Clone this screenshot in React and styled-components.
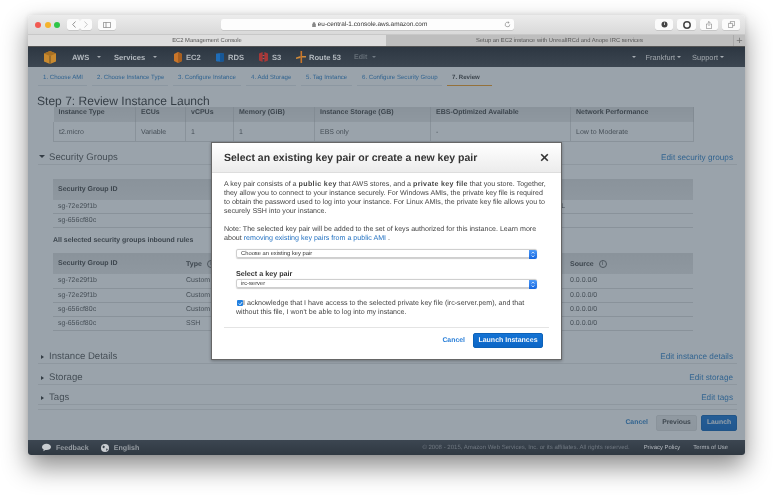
import React from 'react';
import styled, { createGlobalStyle } from 'styled-components';

const GlobalStyle = createGlobalStyle`
  html, body {
    margin: 0;
    padding: 0;
    background: #fff;
    font-family: "Liberation Sans", Arial, sans-serif;
    text-rendering: geometricPrecision;
  }
  * { box-sizing: border-box; }
`;

const Page = styled.div`
  width: 773px;
  height: 495px;
  padding: 15px 28px 0;
  overflow: hidden;
`;

const Window = styled.div`
  position: relative;
  width: 717px;
  height: 440px;
  display: flex;
  flex-direction: column;
  border-radius: 4px 4px 3px 3px;
  background: #fff;
  filter: blur(0.45px);
  will-change: transform;
  box-shadow: 0 12px 26px rgba(0, 0, 0, 0.45), 0 0 6px rgba(0, 0, 0, 0.12);
`;

const TitleBar = styled.div`
  height: 19px;
  flex: none;
  display: flex;
  align-items: center;
  padding: 0 4px 0 7px;
  background: linear-gradient(#ececec, #d9d9d9);
  border-radius: 4px 4px 0 0;
`;

const Light = styled.span`
  width: 6px;
  height: 6px;
  border-radius: 50%;
  margin-right: 3.5px;
  background: ${p => p.$color};
`;

const ToolGroup = styled.div`
  display: flex;
  gap: ${p => p.$gap || 0}px;
  margin-left: ${p => p.$left || 0}px;
`;

const ToolButton = styled.div`
  width: ${p => p.$w || 18}px;
  height: 11px;
  display: flex;
  align-items: center;
  justify-content: center;
  background: #fbfbfb;
  border-radius: 2px;
  box-shadow: 0 0.5px 0.5px rgba(0, 0, 0, 0.2);
`;

const UrlField = styled.div`
  width: 293px;
  height: 11px;
  margin-left: 105px;
  position: relative;
  display: flex;
  align-items: center;
  justify-content: center;
  background: #fdfdfd;
  border-radius: 2px;
  font-size: 6.4px;
  color: #333;
  box-shadow: 0 0.5px 0.5px rgba(0, 0, 0, 0.2);
  padding-left: 4px;
  gap: 2px;
`;

const Reload = styled.svg`
  position: absolute;
  right: 3px;
  top: 2px;
`;

const TabBar = styled.div`
  height: 13px;
  flex: none;
  display: flex;
  font-size: 5.8px;
  color: #555;
  border-top: 1px solid #c8c8c8;
  border-bottom: 1px solid #555;
`;

const Tab = styled.div`
  width: ${p => p.$w}px;
  display: flex;
  align-items: center;
  justify-content: center;
  background: ${p => (p.$active ? '#dedede' : '#bebebe')};
`;

const PlusTab = styled(Tab)`
  font-size: 11px;
  color: #777;
  border-left: 1px solid #aaa;
`;

const NavBar = styled.div`
  height: 20px;
  flex: none;
  display: flex;
  align-items: center;
  padding-left: 16px;
  background: linear-gradient(#2d3742, #3c4651);
  font-size: 7.6px;
  font-weight: 700;
  color: #b3b9bf;
`;

const NavItem = styled.div`
  display: flex;
  align-items: center;
  gap: ${p => p.$gap ?? 4}px;
  width: ${p => p.$w}px;
  flex: none;
  color: ${p => (p.$dim ? '#656e77' : '#b3b9bf')};
  font-size: ${p => p.$size || 7.6}px;
`;

const Caret = styled.span`
  width: 0;
  height: 0;
  flex: none;
  margin-left: ${p => p.$left ?? 4}px;
  border-left: 2px solid transparent;
  border-right: 2px solid transparent;
  border-top: 2px solid ${p => p.$color || '#a7adb3'};
`;

const NavRight = styled.div`
  display: flex;
  align-items: center;
  margin-left: auto;
  margin-right: 21px;
  font-weight: 400;
  font-size: 7.4px;
  color: #a2a8ae;
`;

const RegionLabel = styled.span`
  margin-left: ${p => p.$left}px;
`;

const Content = styled.div`
  flex: 1;
  display: flex;
  flex-direction: column;
  position: relative;
  min-height: 0;
  background: #fff;
  color: #444;
`;

const Steps = styled.div`
  height: 20px;
  flex: none;
  display: flex;
  padding-left: 10px;
  gap: 5px;
  font-size: 6.1px;
`;

const Step = styled.div`
  height: 19px;
  width: ${p => p.$w}px;
  padding: 7px 0 0 5px;
  white-space: nowrap;
  color: ${p => (p.$active ? '#444' : '#2f80c8')};
  font-weight: ${p => (p.$active ? 700 : 400)};
  border-bottom: ${p => (p.$active ? '1px solid #f29a1f' : '1px solid #e2e6ea')};
`;

const Heading = styled.h1`
  height: 20px;
  flex: none;
  margin: 0;
  padding: 7px 0 0 9px;
  font-size: 12.05px;
  line-height: 14px;
  font-weight: 400;
  color: #333;
`;

const DataTable = styled.table`
  flex: none;
  width: 640px;
  margin: ${p => p.$top || 0}px 0 0 25px;
  border-collapse: collapse;
  table-layout: fixed;
  font-size: 7px;
  color: #555;
  th {
    height: ${p => p.$head}px;
    padding: 0 0 ${p => p.$lift || 0}px 5px;
    text-align: left;
    font-weight: 700;
    white-space: nowrap;
    background: linear-gradient(#dedede, #e8e8e8);
    color: #444;
    border-right: ${p => (p.$lined ? '1px solid #cfcfcf' : 'none')};
  }
  td {
    height: ${p => p.$row}px;
    padding: ${p => (p.$lined ? 2 : 0)}px 0 0 5px;
    white-space: nowrap;
    overflow: visible;
    border-bottom: 1px solid #ddd;
    border-left: ${p => (p.$lined ? '1px solid #ddd' : 'none')};
    border-right: ${p => (p.$lined ? '1px solid #ddd' : 'none')};
  }
`;

const InfoMark = styled.span`
  display: inline-flex;
  align-items: center;
  justify-content: center;
  vertical-align: middle;
  width: 8px;
  height: 8px;
  margin-left: 5px;
  border: 0.7px solid #666;
  border-radius: 50%;
  font-size: 6px;
  font-weight: 400;
`;

const Section = styled.div`
  flex: none;
  height: ${p => p.$h}px;
  margin: ${p => p.$top || 0}px 8px 0 10px;
  padding: 0 4px 0 1px;
  display: flex;
  align-items: flex-end;
  border-bottom: 1px solid #e6e6e6;
  font-size: 9.6px;
  line-height: 13px;
  color: #555;
`;

const Arrow = styled.span`
  width: 0;
  height: 0;
  flex: none;
  align-self: flex-end;
  margin: ${p => (p.$open ? '0 4px 6px 0' : '0 5.5px 4px 1.5px')};
  border: 2.5px solid transparent;
  ${p => (p.$open
    ? 'border-top: 3px solid #333; border-left-width: 3px; border-right-width: 3px; border-bottom-width: 0;'
    : 'border-left: 3px solid #333; border-right-width: 0;')}
`;

const EditLink = styled.a`
  margin-left: auto;
  font-size: 8.2px;
  color: #2f80c8;
`;

const RuleLabel = styled.div`
  height: 25px;
  flex: none;
  margin-left: 25px;
  padding-top: 7px;
  font-size: 6.95px;
  line-height: 11px;
  font-weight: 700;
  color: #444;
`;

const Divider = styled.div`
  flex: none;
  height: 5px;
  margin: 0 8px 0 10px;
  border-bottom: 1px solid #e6e6e6;
`;

const Actions = styled.div`
  flex: none;
  display: flex;
  align-items: center;
  justify-content: flex-end;
  margin: 5px 8px 0 0;
`;

const TextButton = styled.span`
  font-size: 6.9px;
  font-weight: 700;
  color: ${p => p.$color || '#2f80c8'};
  margin-right: ${p => p.$right}px;
`;

const Button = styled.div`
  height: ${p => p.$h}px;
  width: ${p => p.$w}px;
  margin-right: ${p => p.$right || 0}px;
  display: flex;
  align-items: center;
  justify-content: center;
  border-radius: 2px;
  font-size: ${p => p.$size || 6.8}px;
  font-weight: 700;
  color: ${p => (p.$primary ? '#f4f8fc' : '#444')};
  background: ${p => (p.$primary ? 'linear-gradient(#1473d4, #0c66c6)' : 'linear-gradient(#ebebeb, #e6e6e6)')};
  border: 1px solid ${p => (p.$primary ? '#0d62b8' : '#dedede')};
`;

const Overlay = styled.div`
  position: absolute;
  inset: 0;
  background: rgba(53, 71, 87, 0.5);
`;

const Footer = styled.div`
  height: 15px;
  flex: none;
  display: flex;
  align-items: center;
  padding-left: 14px;
  background: linear-gradient(#3c4651, #2f3841);
  border-radius: 0 0 3px 3px;
  font-size: 7.1px;
  color: #979da3;
`;

const FooterItem = styled.div`
  display: flex;
  align-items: center;
  gap: ${p => p.$gap}px;
  font-weight: 700;
  margin-right: ${p => p.$right || 0}px;
`;

const Legal = styled.span`
  margin-left: auto;
  font-size: 6.05px;
  color: #6f7780;
`;

const FooterLink = styled.span`
  margin-left: ${p => p.$left}px;
  font-size: 5.9px;
  color: #b4b9bf;
`;

const Modal = styled.div`
  position: absolute;
  left: 183px;
  top: 127px;
  width: 351px;
  height: 218px;
  display: flex;
  flex-direction: column;
  background: #fff;
  border: 1px solid #666;
  box-shadow: 0 1px 3px rgba(0, 0, 0, 0.3);
`;

const ModalHeader = styled.div`
  height: 30px;
  flex: none;
  display: flex;
  align-items: center;
  justify-content: space-between;
  padding: 0 12px;
  background: linear-gradient(#fff, #ececec);
  border-bottom: 1px solid #ddd;
`;

const ModalTitle = styled.h2`
  margin: 0;
  font-size: 10.5px;
  font-weight: 700;
  color: #333;
`;

const ModalBody = styled.div`
  flex: 1;
  padding: 7px 12px 0;
  font-size: 7.1px;
  line-height: 9px;
  color: #444;
`;

const Para = styled.p`
  margin: ${p => p.$top || 0}px 0 0;
  white-space: nowrap;
  a { color: #1f6fc0; }
  b { letter-spacing: 0.35px; }
`;

const SelectBox = styled.div`
  position: relative;
  width: 301px;
  height: 9px;
  margin: ${p => p.$top}px 0 0 12px;
  padding-left: 4px;
  border: 0.5px solid #cfcfcf;
  border-radius: 2px;
  font-size: 5.8px;
  line-height: 8px;
  color: #333;
  box-shadow: 0 0.5px 1px rgba(0, 0, 0, 0.2);
`;

const SelectStepper = styled.span`
  position: absolute;
  right: -0.5px;
  top: -0.5px;
  width: 8px;
  height: 9px;
  border-radius: 0 2px 2px 0;
  background: linear-gradient(#4d9af7, #1466e0);
  display: flex;
  align-items: center;
  justify-content: center;
`;

const FieldLabel = styled.div`
  margin: 10px 0 0 12px;
  height: 11px;
  font-size: 7.2px;
  line-height: 11px;
  font-weight: 700;
  color: #333;
`;

const Acknowledge = styled.div`
  margin: 11px 0 0 12px;
  white-space: nowrap;
  line-height: 9.4px;
`;

const Check = styled.span`
  display: inline-flex;
  align-items: center;
  justify-content: center;
  width: 6px;
  height: 6px;
  margin: 0 0 0 1px;
  vertical-align: -0.5px;
  border-radius: 1px;
  background: #1f7fe0;
`;

const ModalFooter = styled.div`
  margin-top: 9px;
  padding-top: 5px;
  height: 21px;
  display: flex;
  align-items: center;
  justify-content: flex-end;
  border-top: 1px solid #e4e4e4;
`;

const Stepper = () => (
  <SelectStepper>
    <svg width="4" height="7" viewBox="0 0 4 7">
      <path d="M.6 2.6 2 1l1.4 1.6M.6 4.4 2 6l1.4-1.6" fill="none" stroke="#fff" strokeWidth=".7" />
    </svg>
  </SelectStepper>
);

const CubeIcon = () => (
  <svg width="12" height="13" viewBox="0 0 12 13">
    <path d="M0 2.5 6 0l6 2.5v8L6 13l-6-2.5z" fill="#c98a2f" />
    <path d="M0 2.5 6 5l6-2.5L6 0z" fill="#a87022" />
    <path d="M5.4 5h1.2v8H5.4z" fill="#7a5a2a" />
  </svg>
);

const Ec2Icon = () => (
  <svg width="9" height="11" viewBox="0 0 9 11">
    <path d="M1 2 5 0l4 2v7l-4 2-4-2z" fill="#c9762a" />
    <path d="M5 0l4 2v7l-4 2z" fill="#a85f1f" />
  </svg>
);

const RdsIcon = () => (
  <svg width="8" height="11" viewBox="0 0 9 11">
    <path d="M0 1.5C0 .5 9 .5 9 1.5v8c0 1-9 1-9 0z" fill="#1f6db8" />
    <path d="M4.500.8c2.500 0 4.500.3 4.500.7v8c0 .4-2 .7-4.500.7z" fill="#175796" />
  </svg>
);

const S3Icon = () => (
  <svg width="9" height="10" viewBox="0 0 9 10">
    <path d="M0 1.5 3.600 0v10L0 8.5zM9 1.500 5.400 0v10L9 8.500z" fill="#a83838" />
    <path d="M3.600 3h1.800v1H3.600zM3.600 6h1.800v1H3.600z" fill="#c65050" />
  </svg>
);

const RouteIcon = () => (
  <svg width="10" height="12" viewBox="0 0 10 12">
    <path d="M4.500 0h1.600v12H4.500z" fill="#c9762a" />
    <path d="M0 6.500 4.500 5v2L0 8zM6 5h4v1.600H6z" fill="#d08a3a" />
  </svg>
);

const ChatIcon = () => (
  <svg width="9" height="9" viewBox="0 0 9 9">
    <path d="M4.500.8C2 .8 0 2.200 0 4c0 1 .7 1.900 1.700 2.500L1.300 8.200l2-1.100h1.200C7 7.100 9 5.700 9 4S7 .8 4.500.8z" fill="#c9cdd1" />
  </svg>
);

const GlobeIcon = () => (
  <svg width="8" height="8" viewBox="0 0 8 8">
    <circle cx="4" cy="4" r="4" fill="#c9cdd1" />
    <path d="M2 1.500 4 2.500 3 4.500 1.500 3.500zM5 4.500l2 .5-1.500 2z" fill="#3a444e" />
  </svg>
);

const STEPS = [
  ['1. Choose AMI', 49],
  ['2. Choose Instance Type', 76],
  ['3. Configure Instance', 68],
  ['4. Add Storage', 50],
  ['5. Tag Instance', 51],
  ['6. Configure Security Group', 85],
  ['7. Review', 45, true],
];

const RULE_ROWS = [
  ['sg-72e29f1b', 'Custom', '0.0.0.0/0'],
  ['sg-72e29f1b', 'Custom', '0.0.0.0/0'],
  ['sg-656cf80c', 'Custom', '0.0.0.0/0'],
  ['sg-656cf80c', 'SSH', '0.0.0.0/0'],
];

export default function App() {
  return (
    <Page>
      <GlobalStyle />
      <Window>
        <TitleBar>
          <Light $color="#f25a52" />
          <Light $color="#f5b32d" />
          <Light $color="#2fc548" />
          <ToolGroup $left={3.5}>
            <ToolButton $w={13}>
              <svg width="4" height="7" viewBox="0 0 4 7"><path d="M3.500.5 .7 3.500l2.800 3" fill="none" stroke="#777" strokeWidth=".8" /></svg>
            </ToolButton>
            <ToolButton $w={12}>
              <svg width="4" height="7" viewBox="0 0 4 7"><path d="M.5.5l2.800 3-2.800 3" fill="none" stroke="#bbb" strokeWidth=".8" /></svg>
            </ToolButton>
          </ToolGroup>
          <ToolGroup $left={6}>
            <ToolButton $w={18}>
              <svg width="8" height="6" viewBox="0 0 8 6"><path d="M.4.400h7.200v5.200H.4zM3 .4v5.200" fill="none" stroke="#777" strokeWidth=".7" /></svg>
            </ToolButton>
          </ToolGroup>
          <UrlField>
            <svg width="4" height="5" viewBox="0 0 4 5"><path d="M.3 2h3.400v3H.3zM1 2V1.200a1 1 0 0 1 2 0V2" fill="#888" stroke="#888" strokeWidth=".4" /></svg>
            eu-central-1.console.aws.amazon.com
            <Reload width="7" height="7" viewBox="0 0 7 7">
              <path d="M5.800 3.500a2.300 2.300 0 1 1-1-1.900M4.500.6l.5 1.200-1.200.3" fill="none" stroke="#777" strokeWidth=".6" />
            </Reload>
          </UrlField>
          <ToolGroup $left={141} $gap={4}>
            <ToolButton>
              <svg width="7" height="7" viewBox="0 0 7 7"><circle cx="3.500" cy="3.500" r="3" fill="#444" /><path d="M3.500 1.500v2.500" stroke="#ccc" /></svg>
            </ToolButton>
            <ToolButton $w={19}>
              <svg width="8" height="8" viewBox="0 0 8 8"><circle cx="4" cy="4" r="3.200" fill="none" stroke="#444" strokeWidth="1.500" /></svg>
            </ToolButton>
            <ToolButton>
              <svg width="6" height="8" viewBox="0 0 6 8"><path d="M1.800 3H.4v4.600h5.200V3H4.200M3 5V.6M1.700 1.800 3 .5l1.300 1.300" fill="none" stroke="#777" strokeWidth=".6" /></svg>
            </ToolButton>
            <ToolButton>
              <svg width="7" height="7" viewBox="0 0 7 7"><path d="M.4 2.400h4.200v4.200H.4zM2.400 2.400V.4h4.200v4.200H4.600" fill="none" stroke="#777" strokeWidth=".6" /></svg>
            </ToolButton>
          </ToolGroup>
        </TitleBar>
        <TabBar>
          <Tab $w={358} $active>EC2 Management Console</Tab>
          <Tab $w={347}>Setup an EC2 instance with UnrealIRCd and Anope IRC services</Tab>
          <PlusTab $w={12}>+</PlusTab>
        </TabBar>
        <NavBar>
          <NavItem $w={28}><CubeIcon /></NavItem>
          <NavItem $w={42}>AWS<Caret $left={4} /></NavItem>
          <NavItem $w={59}>Services<Caret $left={4} /></NavItem>
          <NavItem $w={43}><Ec2Icon />EC2</NavItem>
          <NavItem $w={43}><RdsIcon />RDS</NavItem>
          <NavItem $w={37}><S3Icon />S3</NavItem>
          <NavItem $w={58} $gap={3}><RouteIcon />Route 53</NavItem>
          <NavItem $w={30} $dim $gap={0} $size={7}>Edit<Caret $left={5} $color="#717a83" /></NavItem>
          <NavRight>
            <Caret />
            <RegionLabel $left={10}>Frankfurt</RegionLabel>
            <Caret $left={2} />
            <RegionLabel $left={11}>Support</RegionLabel>
            <Caret $left={2} />
          </NavRight>
        </NavBar>
        <Content>
          <Steps>
            {STEPS.map(([label, w, active]) => (
              <Step key={label} $w={w} $active={active}>{label}</Step>
            ))}
          </Steps>
          <Heading>Step 7: Review Instance Launch</Heading>
          <DataTable $head={15} $row={19} $lift={5} $lined>
            <colgroup>
              <col width="82" /><col width="50" /><col width="48" /><col width="81" />
              <col width="116" /><col width="140" /><col width="123" />
            </colgroup>
            <thead>
              <tr>
                <th>Instance Type</th><th>ECUs</th><th>vCPUs</th><th>Memory (GiB)</th>
                <th>Instance Storage (GB)</th><th>EBS-Optimized Available</th><th>Network Performance</th>
              </tr>
            </thead>
            <tbody>
              <tr>
                <td>t2.micro</td><td>Variable</td><td>1</td><td>1</td>
                <td>EBS only</td><td>-</td><td>Low to Moderate</td>
              </tr>
            </tbody>
          </DataTable>
          <Section $h={23}>
            <Arrow $open />Security Groups
            <EditLink>Edit security groups</EditLink>
          </Section>
          <DataTable $top={14} $head={21} $row={14}>
            <colgroup><col width="494" /><col width="146" /></colgroup>
            <thead><tr><th>Security Group ID</th><th /></tr></thead>
            <tbody>
              <tr><td>sg-72e29f1b</td><td>SSL</td></tr>
              <tr><td>sg-656cf80c</td><td /></tr>
            </tbody>
          </DataTable>
          <RuleLabel>All selected security groups inbound rules</RuleLabel>
          <DataTable $head={21} $row={14}>
            <colgroup><col width="128" /><col width="384" /><col width="128" /></colgroup>
            <thead>
              <tr>
                <th>Security Group ID</th><th>Type<InfoMark>i</InfoMark></th><th>Source<InfoMark>i</InfoMark></th>
              </tr>
            </thead>
            <tbody>
              {RULE_ROWS.map(([id, type, source], i) => (
                <tr key={i}><td>{id}</td><td>{type}</td><td>{source}</td></tr>
              ))}
            </tbody>
          </DataTable>
          <Section $h={17} $top={16}>
            <Arrow />Instance Details
            <EditLink>Edit instance details</EditLink>
          </Section>
          <Section $h={21}>
            <Arrow />Storage
            <EditLink>Edit storage</EditLink>
          </Section>
          <Section $h={20}>
            <Arrow />Tags
            <EditLink>Edit tags</EditLink>
          </Section>
          <Divider />
          <Actions>
            <TextButton $right={8}>Cancel</TextButton>
            <Button $h={16} $w={41} $right={4}>Previous</Button>
            <Button $h={16} $w={36} $primary>Launch</Button>
          </Actions>
          <Overlay />
        </Content>
        <Footer>
          <FooterItem $right={12} $gap={5}><ChatIcon />Feedback</FooterItem>
          <FooterItem $gap={5}><GlobeIcon />English</FooterItem>
          <Legal>© 2008 - 2015, Amazon Web Services, Inc. or its affiliates. All rights reserved.</Legal>
          <FooterLink $left={14}>Privacy Policy</FooterLink>
          <FooterLink $left={13}>Terms of Use</FooterLink>
          <FooterLink $left={17} />
        </Footer>
        <Modal>
          <ModalHeader>
            <ModalTitle>Select an existing key pair or create a new key pair</ModalTitle>
            <svg width="9" height="9" viewBox="0 0 9 9">
              <path d="M1.200 1.200l6.600 6.600M7.800 1.200 1.200 7.800" stroke="#333" strokeWidth="1.600" />
            </svg>
          </ModalHeader>
          <ModalBody>
            <Para>
              A key pair consists of a <b>public key</b> that AWS stores, and a <b>private key file</b> that you store. Together,<br />
              they allow you to connect to your instance securely. For Windows AMIs, the private key file is required<br />
              to obtain the password used to log into your instance. For Linux AMIs, the private key file allows you to<br />
              securely SSH into your instance.
            </Para>
            <Para $top={9}>
              Note: The selected key pair will be added to the set of keys authorized for this instance. Learn more<br />
              about <a>removing existing key pairs from a public AMI</a> .
            </Para>
            <SelectBox $top={6}>Choose an existing key pair<Stepper /></SelectBox>
            <FieldLabel>Select a key pair</FieldLabel>
            <SelectBox $top={0}>irc-server<Stepper /></SelectBox>
            <Acknowledge>
              <Check>
                <svg width="5" height="5" viewBox="0 0 5 5"><path d="M.8 2.500 2 3.800 4.200 1" fill="none" stroke="#fff" strokeWidth=".9" /></svg>
              </Check>
              I acknowledge that I have access to the selected private key file (irc-server.pem), and that<br />
              without this file, I won't be able to log into my instance.
            </Acknowledge>
            <ModalFooter>
              <TextButton $right={8} $color="#2a7fd8">Cancel</TextButton>
              <Button $h={15} $w={70} $primary $right={6} $size={7}>Launch Instances</Button>
            </ModalFooter>
          </ModalBody>
        </Modal>
      </Window>
    </Page>
  );
}
